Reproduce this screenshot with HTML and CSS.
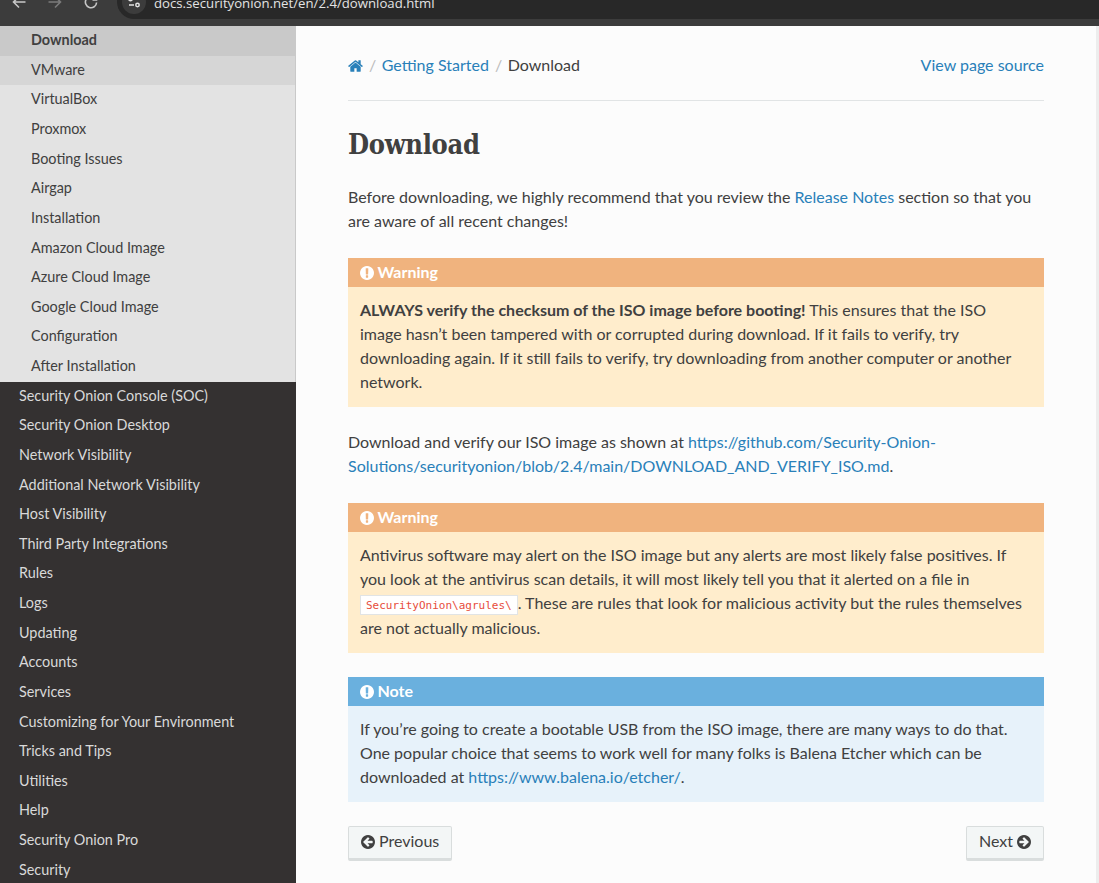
FILE: index.html
```
<!DOCTYPE html>
<html lang="en">
<head>
    <meta charset="UTF-8">
    <meta name="viewport" content="width=device-width, initial-scale=1.0">
    <title>Download — Security Onion Documentation 2.4</title>
    <link rel="stylesheet" href="styles.css">
</head>
<body>
    <svg class="sprite" width="0" height="0">
        <symbol id="home" viewBox="64 128 1664 1536">
            <path d="M1472 992v480q0 26-19 45t-45 19h-384v-384h-256v384h-384q-26 0-45-19t-19-45v-480q0-1 .5-3t.5-3l575-474 575 474q1 2 1 6zm223-69l-62 74q-8 9-21 11h-3q-13 0-21-7l-692-577-692 577q-12 8-24 7-13-2-21-11l-62-74q-8-10-7-23.5t11-21.5l719-599q32-26 76-26t76 26l244 204v-195q0-14 9-23t23-9h192q14 0 23 9t9 23v408l219 182q10 8 11 21.5t-7 23.5z"/>
        </symbol>
        <symbol id="alert" viewBox="128 128 1536 1536">
            <path d="M896 128q209 0 385.500 103t279.500 279.500 103 385.500-103 385.500-279.500 279.500-385.500 103-385.500-103-279.500-279.500-103-385.500 103-385.500 279.500-279.500 385.500-103zm128 1247v-190q0-14-9-23.500t-22-9.500h-192q-13 0-23 10t-10 23v190q0 13 10 23t23 10h192q13 0 22-9.500t9-23.500zm-2-344l18-621q0-12-10-18-10-8-24-8h-220q-14 0-24 8-10 6-10 18l17 621q0 10 10 17.500t24 7.500h185q14 0 23.500-7.500t10.500-17.500z"/>
        </symbol>
        <symbol id="arrow" viewBox="128 128 1536 1536">
            <path d="M1408 960v-128q0-26-19-45t-45-19h-502l189-189q19-19 19-45t-19-45l-91-91q-18-18-45-18t-45 18l-362 362-91 91q-18 18-18 45t18 45l91 91 362 362q18 18 45 18t45-18l91-91q18-18 18-45t-18-45l-189-189h502q26 0 45-19t19-45zm256-64q0 209-103 385.500t-279.500 279.500-385.500 103-385.500-103-279.500-279.500-103-385.500 103-385.500 279.500-279.500 385.500-103 385.500 103 279.500 279.500 103 385.500z"/>
        </symbol>
    </svg>

    <div class="toolbar">
        <svg class="tool" viewBox="0 0 16 16"><path d="M14.500 8H2.500M8 2.500L2.500 8L8 13.500"/></svg>
        <svg class="tool disabled" viewBox="0 0 16 16"><path d="M1.500 8H13.500M8 2.500L13.500 8L8 13.500"/></svg>
        <svg class="tool" viewBox="0 0 16 16"><path d="M13.600 8.500A5.600 5.600 0 1 1 12 4.200L13.500 5.800M13.500 2V6H9.500"/></svg>
        <div class="address">
            <span class="site-info">
                <svg viewBox="0 0 14 14"><path d="M6.500 4H12M2 10H7"/><circle cx="3.500" cy="4" r="1.700"/><circle cx="10.500" cy="10" r="1.700"/></svg>
            </span>
            <span class="url">docs.securityonion.net/en/2.4/download.html</span>
        </div>
    </div>

    <div class="page">
        <nav class="sidebar">
            <ul class="submenu">
                <li class="current"><a>Download</a></li>
                <li class="hover"><a>VMware</a></li>
                <li><a>VirtualBox</a></li>
                <li><a>Proxmox</a></li>
                <li><a>Booting Issues</a></li>
                <li><a>Airgap</a></li>
                <li><a>Installation</a></li>
                <li><a>Amazon Cloud Image</a></li>
                <li><a>Azure Cloud Image</a></li>
                <li><a>Google Cloud Image</a></li>
                <li><a>Configuration</a></li>
                <li><a>After Installation</a></li>
            </ul>
            <ul class="menu">
                <li><a>Security Onion Console (SOC)</a></li>
                <li><a>Security Onion Desktop</a></li>
                <li><a>Network Visibility</a></li>
                <li><a>Additional Network Visibility</a></li>
                <li><a>Host Visibility</a></li>
                <li><a>Third Party Integrations</a></li>
                <li><a>Rules</a></li>
                <li><a>Logs</a></li>
                <li><a>Updating</a></li>
                <li><a>Accounts</a></li>
                <li><a>Services</a></li>
                <li><a>Customizing for Your Environment</a></li>
                <li><a>Tricks and Tips</a></li>
                <li><a>Utilities</a></li>
                <li><a>Help</a></li>
                <li><a>Security Onion Pro</a></li>
                <li><a>Security</a></li>
            </ul>
        </nav>

        <main class="content">
            <div class="breadcrumbs">
                <a class="link"><svg class="icon home"><use href="#home"/></svg></a>
                <span class="slash">/</span>
                <a class="link">Getting Started</a>
                <span class="slash">/</span>
                <span>Download</span>
                <a class="link source">View page source</a>
            </div>
            <hr>
            <h1>Download</h1>
            <p>Before downloading, we highly recommend that you review the <a class="link">Release Notes</a> section so that you are aware of all recent changes!</p>

            <div class="admonition warning">
                <p class="title"><svg class="icon"><use href="#alert"/></svg>Warning</p>
                <p><strong>ALWAYS verify the checksum of the ISO image before booting!</strong> This ensures that the ISO image hasn’t been tampered with or corrupted during download. If it fails to verify, try downloading again. If it still fails to verify, try downloading from another computer or another network.</p>
            </div>

            <p>Download and verify our ISO image as shown at <a class="link">https://github.com/Security-Onion-Solutions/securityonion/blob/2.4/main/DOWNLOAD_AND_VERIFY_ISO.md</a>.</p>

            <div class="admonition warning">
                <p class="title"><svg class="icon"><use href="#alert"/></svg>Warning</p>
                <p>Antivirus software may alert on the ISO image but any alerts are most likely false positives. If you look at the antivirus scan details, it will most likely tell you that it alerted on a file in <code>SecurityOnion\agrules\</code>. These are rules that look for malicious activity but the rules themselves are not actually malicious.</p>
            </div>

            <div class="admonition note">
                <p class="title"><svg class="icon"><use href="#alert"/></svg>Note</p>
                <p>If you’re going to create a bootable USB from the ISO image, there are many ways to do that. One popular choice that seems to work well for many folks is Balena Etcher which can be downloaded at <a class="link">https://www.balena.io/etcher/</a>.</p>
            </div>

            <div class="pager">
                <a class="btn"><svg class="icon"><use href="#arrow"/></svg>Previous</a>
                <a class="btn">Next<svg class="icon next"><use href="#arrow"/></svg></a>
            </div>
        </main>
        <div class="scrollbar"></div>
    </div>
</body>
</html>
```
FILE: styles.css
```
* {
    box-sizing: border-box;
}
body {
    margin: 0;
    height: 100vh;
    overflow: hidden;
    display: flex;
    flex-direction: column;
    font-family: Lato, "Open Sans", sans-serif;
    font-size: 16px;
    line-height: 24px;
    color: #404040;
    background: #fcfcfc;
}
.sprite {
    display: block;
    flex: none;
}

/* browser toolbar */
.toolbar {
    height: 26px;
    flex: none;
    display: flex;
    align-items: flex-end;
    padding: 0 0 7px 11px;
    background: #3c3c3c;
}
.tool {
    width: 16px;
    height: 16px;
    flex: none;
    margin: 0 20px 9px 0;
    fill: none;
    stroke: #c7c7c7;
    stroke-width: 1.6;
}
.tool.disabled {
    stroke: #7b7b7b;
}
.address {
    flex: 1;
    height: 34px;
    display: flex;
    align-items: center;
    padding-left: 5px;
    margin-left: -2px;
    border-radius: 17px 0 0 17px;
    background: #282828;
}
.site-info {
    width: 24px;
    height: 24px;
    display: flex;
    align-items: center;
    justify-content: center;
    border-radius: 50%;
    background: #3c3c3c;
}
.site-info svg {
    width: 14px;
    height: 14px;
    fill: none;
    stroke: #e3e3e3;
    stroke-width: 1.5;
}
.url {
    margin: 1px 0 0 8px;
    font: 13.2px/20px "Open Sans", "Noto Sans", sans-serif;
    color: #e3e3e3;
}

/* sidebar */
.page {
    flex: 1;
    min-height: 0;
    display: flex;
}
.sidebar {
    width: 296px;
    flex: none;
    font-size: 14.4px;
    line-height: 18px;
    background: #343131;
}
.sidebar ul {
    list-style: none;
    margin: 0;
    padding: 0;
}
.sidebar a {
    display: block;
    padding: 5.2px 19px 6.45px;
    color: #d9d9d9;
}
.submenu {
    background: #e3e3e3;
}
.submenu li {
    border-right: 1px solid #c9c9c9;
}
.sidebar .submenu a {
    padding-left: 31px;
    color: #404040;
}
.submenu .current {
    background: #c9c9c9;
    font-weight: bold;
}
.submenu .hover {
    background: #d6d6d6;
}

/* document */
.content {
    flex: 1;
    padding: 27px 52px 0;
}
.link {
    color: #2980b9;
}
.breadcrumbs {
    display: flex;
    height: 26px;
}
.slash {
    padding: 0 5.5px 0 6px;
    color: #bbb;
}
.source {
    margin-left: auto;
}
hr {
    height: 1px;
    margin: 21px 0 25px;
    border: 0;
    background: #e1e4e5;
}
h1 {
    margin: 0 0 23px;
    font: bold 27px/37px "DejaVu Serif Condensed", "DejaVu Serif", serif;
    font-stretch: condensed;
    letter-spacing: -0.3px;
}
p {
    margin: -1px 0 25px;
}
.icon {
    width: 14px;
    height: 14px;
    fill: currentColor;
    vertical-align: -2px;
    margin-right: 3.5px;
}
.icon.home {
    width: 15px;
    height: 14px;
    margin: 0;
}
.icon.next {
    margin: 0 0 0 4px;
    transform: scaleX(-1);
}
.admonition {
    padding: 0 14px 13px 12px;
    margin-bottom: 24px;
}
.admonition p {
    margin: 0;
}
.admonition .title {
    margin: 0 -14px 11px -12px;
    padding: 0 12px 2px;
    line-height: 27px;
    font-weight: bold;
    color: #fff;
}
.warning {
    background: #ffedcc;
}
.warning .title {
    background: #f0b37e;
}
.note {
    background: #e7f2fa;
}
.note .title {
    background: #6ab0de;
}
code {
    padding: 3px 5px 2px;
    border: 1px solid #e1e4e5;
    font: 11px/21px "DejaVu Sans Mono", monospace;
    color: #e74c3c;
    background: #fff;
}
.pager {
    display: flex;
    justify-content: space-between;
}
.btn {
    height: 35px;
    padding: 2px 12px 0;
    border: 1px solid #d9dddd;
    border-bottom-width: 3px;
    border-radius: 2px;
    background: #f3f6f6;
}
.btn .icon {
    margin-right: 4px;
}
.btn .icon.next {
    margin-right: 0;
}
.scrollbar {
    width: 3px;
    background: #ededed;
}
```
